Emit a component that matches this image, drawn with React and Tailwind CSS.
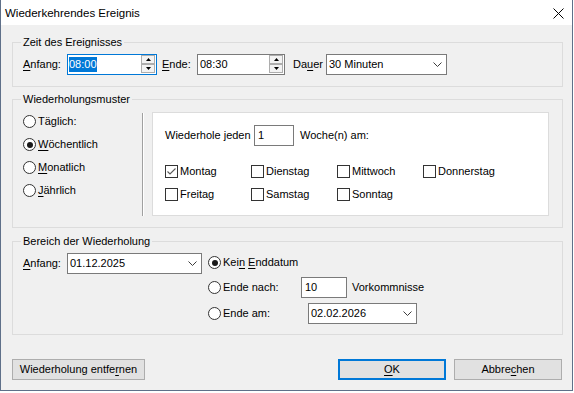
const font = "font-['Liberation_Sans',Arial,sans-serif]"

function U({ children }) {
  return <span className="underline decoration-1 underline-offset-[2px]">{children}</span>
}

function Radio({ checked }) {
  return (
    <span className="flex h-[13px] w-[13px] shrink-0 items-center justify-center rounded-full border border-[#333333] bg-white">
      {checked && <span className="h-[6px] w-[6px] rounded-full bg-[#1a1a1a]" />}
    </span>
  )
}

function Check({ checked }) {
  return (
    <span className="flex h-[13px] w-[13px] shrink-0 items-center justify-center border border-[#333333] bg-white">
      {checked && (
        <svg width="11" height="11" viewBox="0 0 11 11">
          <path d="M1.5 5.5 L4 8 L9.5 2.5" fill="none" stroke="#5a5a5a" strokeWidth="1.1" />
        </svg>
      )}
    </span>
  )
}

function Chevron() {
  return (
    <svg width="9" height="5" viewBox="0 0 9 5" className="shrink-0">
      <path d="M0.5 0.5 L4.5 4.5 L8.5 0.5" fill="none" stroke="#3c3c3c" />
    </svg>
  )
}

function Spin() {
  return (
    <span className="flex flex-col pr-[1px]">
      <span className="flex h-[9px] w-[14px] items-center justify-center border border-[#adadad] bg-[#f3f3f3]">
        <svg width="5" height="3" viewBox="0 0 5 3">
          <path d="M2.5 0 L5 3 L0 3 Z" fill="#000" />
        </svg>
      </span>
      <span className="flex h-[9px] w-[14px] items-center justify-center border border-[#adadad] bg-[#f3f3f3]">
        <svg width="5" height="3" viewBox="0 0 5 3">
          <path d="M0 0 L5 0 L2.5 3 Z" fill="#000" />
        </svg>
      </span>
    </span>
  )
}

function Combo({ value, className }) {
  return (
    <div className={`flex h-[21px] shrink-0 items-center justify-between border border-[#7a7a7a] bg-white pl-[2px] pr-[4px] ${className}`}>
      <span>{value}</span>
      <Chevron />
    </div>
  )
}

function Btn({ children, className }) {
  return (
    <div className={`flex h-[21px] items-center justify-center bg-[#e1e1e1] ${className}`}>
      {children}
    </div>
  )
}

function Group({ title, className, children }) {
  return (
    <fieldset className={`w-[551px] border border-[#dcdcdc] ${className}`}>
      <legend className="ml-[8px] px-[2px]">{title}</legend>
      {children}
    </fieldset>
  )
}

const patterns = [
  { label: 'Täglich:', checked: false },
  { label: <><U>W</U>öchentlich</>, checked: true },
  { label: <><U>M</U>onatlich</>, checked: false },
  { label: <><U>J</U>ährlich</>, checked: false },
]

const days = ['Montag', 'Dienstag', 'Mittwoch', 'Donnerstag', 'Freitag', 'Samstag', 'Sonntag']

export default function App() {
  return (
    <div className={`h-[393px] w-[574px] bg-white text-[11px] leading-[13px] text-black ${font}`}>
      <div className="flex h-[391px] w-[573px] flex-col border-x border-b border-[#5f7089]">
        {/* Titelleiste */}
        <div className="flex h-[25px] shrink-0 items-start justify-between bg-white">
          <span className="pl-[4px] pt-[6px] text-[11.5px] leading-[14px]">Wiederkehrendes Ereignis</span>
          <svg className="mr-[8px] mt-[8px]" width="11" height="11" viewBox="0 0 11 11">
            <path d="M0.5 0.5 L10.5 10.5 M10.5 0.5 L0.5 10.5" stroke="#000" strokeWidth="1" />
          </svg>
        </div>

        <div className="flex-1 bg-[#f0f0f0] pl-[11px]">
          {/* Zeit */}
          <Group title="Zeit des Ereignisses" className="mt-[11px]">
            <div className="flex items-center pb-[11px] pl-[10px] pt-[5px]">
              <span className="w-[44px]"><U>A</U>nfang:</span>
              <div className="flex h-[21px] w-[90px] items-start border border-[#0078d7] bg-white">
                <div className="flex-1 pl-[1px] pt-[2px]">
                  <span className="inline-block h-[15px] bg-[#0078d7] leading-[15px] text-white">08:00</span>
                </div>
                <Spin />
              </div>
              <span className="ml-[5px] w-[35px]"><U>E</U>nde:</span>
              <div className="flex h-[21px] w-[88px] items-start border border-[#7a7a7a] bg-white">
                <div className="flex-1 pl-[2px] pt-[3px]">08:30</div>
                <Spin />
              </div>
              <span className="ml-[8px] w-[33px]">Da<U>u</U>er</span>
              <Combo value="30 Minuten" className="w-[121px]" />
            </div>
          </Group>

          {/* Muster */}
          <Group title="Wiederholungsmuster" className="mt-[6px]">
            <div className="flex items-start pb-[11px] pl-[10px]">
              <div className="mt-[4px] flex w-[119px] flex-col">
                {patterns.map((p, i) => (
                  <div key={i} className="flex h-[23px] items-center gap-[2px]">
                    <Radio checked={p.checked} />
                    <span>{p.label}</span>
                  </div>
                ))}
              </div>
              <div className="mt-[7px] h-[103px] w-[2px] border-l border-r border-l-[#a0a0a0] border-r-white" />
              <div className="ml-[8px] mt-[6px] h-[104px] w-[397px] border border-[#dcdcdc] bg-white pl-[12px] pt-[12px]">
                <div className="flex h-[21px] items-center">
                  <span className="w-[89px]">Wiederhole jeden</span>
                  <div className="flex h-[21px] w-[40px] items-center border border-[#7a7a7a] bg-white pl-[3px]">1</div>
                  <span className="ml-[6px]">Woche(n) am:</span>
                </div>
                <div className="mt-[14px] grid grid-cols-[86px_86px_86px_86px]">
                  {days.map((d) => (
                    <div key={d} className="flex h-[23px] items-center gap-[2px]">
                      <Check checked={d === 'Montag'} />
                      <span>{d}</span>
                    </div>
                  ))}
                </div>
              </div>
            </div>
          </Group>

          {/* Bereich */}
          <Group title="Bereich der Wiederholung" className="mt-[7px]">
            <div className="flex items-start pb-[8px] pl-[10px] pt-[2px]">
              <div className="mt-[3px] flex items-center">
                <span className="w-[44px]"><U>A</U>nfang:</span>
                <Combo value="01.12.2025" className="w-[135px]" />
              </div>
              <div className="ml-[6px] flex flex-col">
                <div className="flex h-[25px] items-center gap-[2px]">
                  <Radio checked />
                  <span>Kei<U>n</U> <U>E</U>nddatum</span>
                </div>
                <div className="flex h-[25px] items-center gap-[2px]">
                  <Radio />
                  <span className="w-[76px]">Ende nach:</span>
                  <div className="flex h-[21px] w-[46px] items-center border border-[#7a7a7a] bg-white pl-[3px]">10</div>
                  <span className="ml-[3px]">Vorkommnisse</span>
                </div>
                <div className="flex h-[26px] items-center gap-[2px]">
                  <Radio />
                  <span className="w-[83px]">Ende am:</span>
                  <Combo value="02.02.2026" className="w-[109px]" />
                </div>
              </div>
            </div>
          </Group>

          {/* Schaltflächen */}
          <div className="mt-[24px] flex w-[551px] pr-[1px]">
            <Btn className="w-[133px] border border-[#adadad]">Wiederholung entfe<U>r</U>nen</Btn>
            <Btn className="ml-auto w-[108px] border-2 border-[#0078d7]"><U>O</U>K</Btn>
            <Btn className="ml-[8px] w-[108px] border border-[#adadad]">Abbre<U>c</U>hen</Btn>
          </div>
        </div>
      </div>
    </div>
  )
}
